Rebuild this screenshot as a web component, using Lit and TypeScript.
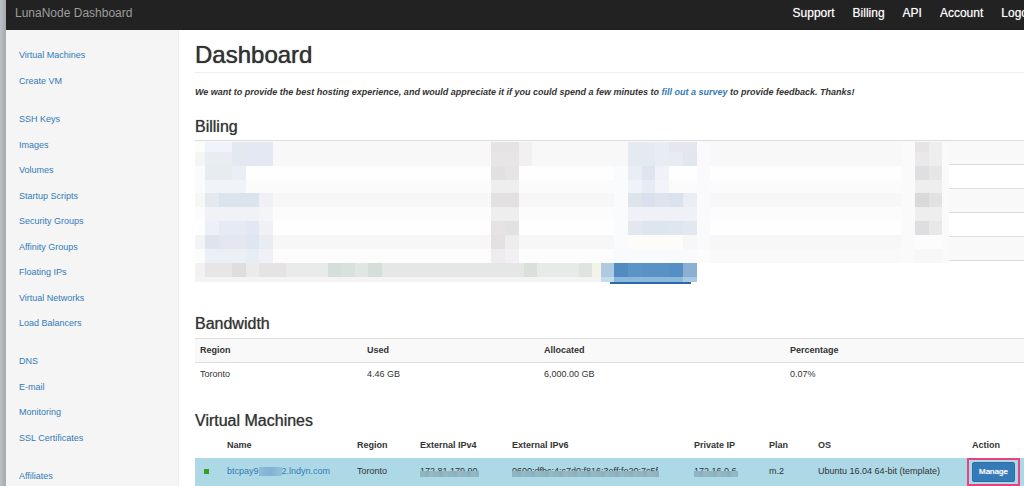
import { LitElement, html, svg, css } from "lit";
import { customElement } from "lit/decorators.js";

const NAV = ["Support", "Billing", "API", "Account", "Logout"];

const MENU = [
  ["Virtual Machines", "Create VM"],
  [
    "SSH Keys",
    "Images",
    "Volumes",
    "Startup Scripts",
    "Security Groups",
    "Affinity Groups",
    "Floating IPs",
    "Virtual Networks",
    "Load Balancers",
  ],
  ["DNS", "E-mail", "Monitoring", "SSL Certificates"],
  ["Affiliates"],
];

type Cell = [number, number, number, number, string];

// Privacy mosaic: x, y, width, height, fill.
const MOSAIC: Cell[] = [
  // bands
  [0, 1, 754, 24, "#f8f8f8"],
  [0, 25, 754, 14, "#fefefe"],
  [0, 39, 754, 13, "#fbfbfb"],
  [0, 52, 754, 14, "#f7f7f7"],
  [0, 66, 754, 14, "#fcfcfc"],
  [0, 80, 754, 14, "#fefefe"],
  [0, 94, 754, 14, "#f7f7f7"],
  [0, 108, 515, 14, "#fcfcfc"],
  [515, 108, 239, 14, "#f9f9f9"],
  [0, 122, 754, 24, "#ffffff"],
  // left labels
  [0, 1, 10, 10, "#fcfcfd"],
  [0, 11, 10, 14, "#f5f5f6"],
  [10, 1, 27, 10, "#f0f3f9"],
  [10, 11, 27, 14, "#e9edf2"],
  [37, 1, 14, 24, "#e4e8ef"],
  [51, 1, 27, 24, "#e3e8f2"],
  [10, 25, 27, 14, "#e7ecf1"],
  [37, 25, 14, 14, "#eaeff5"],
  [10, 39, 41, 13, "#f0f3f7"],
  [0, 25, 10, 27, "#fafbfd"],
  [10, 52, 14, 14, "#e4e9ef"],
  [24, 52, 40, 14, "#dbe3ed"],
  [64, 52, 14, 14, "#eff1f6"],
  [10, 66, 54, 14, "#f0f2f6"],
  [64, 66, 14, 14, "#f4f5f9"],
  [10, 80, 14, 14, "#edeff9"],
  [24, 80, 27, 14, "#e6eaf5"],
  [51, 80, 13, 14, "#e1e7f3"],
  [64, 80, 14, 14, "#eff1f7"],
  [0, 94, 10, 14, "#f3f4f5"],
  [10, 94, 14, 14, "#dfe3ed"],
  [24, 94, 27, 14, "#e4e7ef"],
  [51, 94, 13, 14, "#e0e6f1"],
  [64, 94, 14, 14, "#e9ecf3"],
  [10, 108, 41, 14, "#ebeff6"],
  [51, 108, 13, 14, "#e8ecf3"],
  [64, 108, 14, 14, "#eff1f6"],
  // left amounts
  [296, 1, 28, 10, "#e5e3e4"],
  [296, 11, 28, 14, "#e8e5e6"],
  [324, 1, 13, 24, "#f3f0f2"],
  [296, 25, 14, 14, "#e1e1e2"],
  [310, 25, 14, 14, "#e6e4e5"],
  [296, 39, 28, 13, "#eeeeee"],
  [296, 52, 28, 14, "#e2e0e1"],
  [296, 66, 28, 14, "#eeeeef"],
  [296, 80, 14, 14, "#e5e3e4"],
  [310, 80, 14, 14, "#e2e2e2"],
  [296, 94, 14, 14, "#e3e1e2"],
  [310, 94, 14, 14, "#eeedee"],
  [296, 108, 14, 14, "#eeecee"],
  [310, 108, 14, 14, "#f2f0f2"],
  // right labels
  [419, 25, 14, 97, "#fafbfd"],
  [433, 1, 27, 24, "#e5e9f0"],
  [460, 1, 14, 24, "#e8ecf3"],
  [474, 1, 28, 10, "#e4e8ee"],
  [474, 11, 14, 14, "#e7ebf2"],
  [488, 11, 14, 14, "#e2e6ed"],
  [433, 25, 14, 14, "#e9eef5"],
  [447, 25, 13, 14, "#dee5f1"],
  [460, 25, 14, 14, "#eff2f9"],
  [433, 39, 14, 13, "#eff2f7"],
  [447, 39, 13, 13, "#e7ecf4"],
  [460, 39, 14, 13, "#f2f4f9"],
  [433, 52, 14, 14, "#dee4ec"],
  [447, 52, 13, 14, "#d9e1ee"],
  [460, 52, 14, 14, "#dde4ed"],
  [474, 52, 14, 14, "#dae2ed"],
  [488, 52, 14, 14, "#e9edf4"],
  [433, 66, 69, 14, "#eff1f6"],
  [433, 80, 14, 14, "#e3e8f0"],
  [447, 80, 27, 14, "#dde5ef"],
  [474, 80, 14, 14, "#dee6f0"],
  [488, 80, 14, 14, "#e1e8f0"],
  [433, 94, 55, 14, "#fefcf8"],
  [419, 108, 83, 14, "#f8fafb"],
  [502, 1, 13, 107, "#fafafc"],
  // right amounts
  [706, 1, 14, 121, "#fafafa"],
  [720, 1, 14, 10, "#e6e4e5"],
  [720, 11, 14, 14, "#ebe8e9"],
  [734, 1, 13, 24, "#eeeeee"],
  [720, 25, 14, 14, "#dfdfe1"],
  [734, 25, 13, 14, "#e6e6e7"],
  [720, 39, 27, 13, "#eeeeef"],
  [720, 52, 14, 14, "#d9d9da"],
  [734, 52, 13, 14, "#e2e2e3"],
  [720, 66, 27, 14, "#eeeeef"],
  [720, 80, 14, 14, "#dedee0"],
  [734, 80, 13, 14, "#e8e8e9"],
  [720, 94, 27, 14, "#fcfcfc"],
  [720, 108, 27, 14, "#f7f7f7"],
  [747, 1, 7, 121, "#fafafa"],
  // bottom strip
  [0, 122, 10, 14, "#f3f1f2"],
  [10, 122, 27, 14, "#e7e5e5"],
  [37, 122, 14, 14, "#dfdedf"],
  [51, 122, 13, 14, "#ebebec"],
  [64, 122, 27, 14, "#e6e3e4"],
  [91, 122, 42, 14, "#e8ebea"],
  [133, 122, 13, 14, "#d5dfd9"],
  [146, 122, 14, 14, "#d9e1dc"],
  [160, 122, 13, 14, "#e0e6e2"],
  [173, 122, 14, 14, "#d5dfd9"],
  [187, 122, 142, 14, "#e4e7e5"],
  [329, 122, 13, 14, "#d9e0d9"],
  [342, 122, 42, 14, "#e7ebe7"],
  [384, 122, 13, 14, "#dfe4df"],
  [397, 122, 9, 14, "#f2f4ea"],
  [0, 136, 406, 5, "#f3f4f3"],
  [406, 122, 13, 14, "#aecae2"],
  [419, 122, 14, 14, "#508cc2"],
  [433, 122, 14, 14, "#5c94c7"],
  [447, 122, 27, 14, "#5b92c5"],
  [474, 122, 14, 14, "#5590c4"],
  [488, 122, 14, 14, "#8bb0d4"],
  [406, 136, 13, 5, "#c5dcef"],
  [419, 136, 69, 5, "#8db8de"],
  [488, 136, 14, 5, "#a9c8e4"],
  [415, 141, 81, 2, "#2b6aa6"],
];

const VM_HEAD = ["", "Name", "Region", "External IPv4", "External IPv6", "Private IP", "Plan", "OS", "Action"];

@customElement("app-root")
export class AppRoot extends LitElement {
  static styles = css`
    :host {
      display: block;
      font: 9px/13px "Liberation Sans", Arial, sans-serif;
      color: #333;
      background: #fff;
    }
    a {
      color: #337ab7;
      text-decoration: none;
    }
    .window {
      display: grid;
      grid-template-columns: 173px minmax(0, 1fr);
      grid-template-rows: 30px 1fr;
      min-height: 100vh;
      box-sizing: border-box;
      overflow: hidden;
      padding-left: 6px;
      background: linear-gradient(90deg, #bcc1c5, #a4a9ad) left / 6px 100% no-repeat;
    }
    .topbar {
      grid-column: 1 / -1;
      display: flex;
      align-items: center;
      justify-content: space-between;
      padding: 0 0 4px 9px;
      background: #222;
      font-size: 12px;
      line-height: 16px;
      white-space: nowrap;
      overflow: hidden;
    }
    .brand {
      color: #9d9d9d;
    }
    .nav {
      display: flex;
      gap: 18px;
      margin-right: -14px;
    }
    .nav a {
      color: #fff;
      text-shadow: 0 0 1px #999;
    }
    .sidebar {
      display: flex;
      flex-direction: column;
      gap: 13px;
      padding: 13px 0 0 13px;
      background: #f5f5f5;
      border-right: 1px solid #eee;
    }
    .group {
      display: grid;
      grid-auto-rows: 25px 26px;
      align-items: center;
      margin: 0;
      padding: 0;
      list-style: none;
    }
    .main {
      padding: 12px 0 0 16px;
    }
    h1,
    h2,
    p {
      margin: 0;
    }
    h1 {
      padding-bottom: 4px;
      border-bottom: 1px solid #eee;
      font-size: 24px;
      line-height: 26px;
      font-weight: 400;
      text-shadow: 0 0 1px #333;
    }
    h2 {
      font-size: 16px;
      line-height: 18px;
      font-weight: 400;
      text-shadow: 0 0 1px #777;
    }
    .notice {
      padding: 13px 0 19px;
      font-weight: 700;
      font-style: italic;
    }
    table {
      width: 100%;
      border-collapse: collapse;
      table-layout: fixed;
    }
    th,
    td {
      box-sizing: border-box;
      padding: 0 5px;
      text-align: left;
      white-space: nowrap;
      font-size: 9px;
    }
    .billing {
      position: relative;
      margin: 4px 0 30px;
    }
    .billing td {
      height: 24px;
      border-top: 1px solid #ddd;
    }
    .billing tr:nth-child(odd) td {
      background: #f9f9f9;
    }
    .billing table {
      border-bottom: 1px solid #ddd;
    }
    .actions {
      height: 24px;
    }
    .mosaic {
      position: absolute;
      top: 1px;
      left: 0;
    }
    .bandwidth {
      margin: 5px 0 25px;
    }
    .bandwidth th,
    .bandwidth td {
      height: 24px;
      border-top: 1px solid #ddd;
    }
    .bandwidth th {
      background: #f9f9f9;
    }
    .bw-region {
      width: 167px;
    }
    .bw-used {
      width: 177px;
    }
    .bw-alloc {
      width: 246px;
    }
    .vms {
      margin-top: 4px;
    }
    .vms th {
      height: 24px;
    }
    .vms td {
      height: 28px;
      background: #add8e6;
    }
    .c0 { width: 27px; }
    .c1 { width: 130px; }
    .c2 { width: 63px; }
    .c3 { width: 92px; }
    .c4 { width: 182px; }
    .c5 { width: 75px; }
    .c6 { width: 49px; }
    .c7 { width: 154px; }
    .vms .status {
      padding-left: 9px;
    }
    .dot {
      display: block;
      width: 5px;
      height: 5px;
      background: #3a9d23;
    }
    .veiled {
      position: relative;
      display: inline-block;
    }
    .veiled::after {
      content: "";
      position: absolute;
      inset: 6px -1px 1px 0;
      background: repeating-linear-gradient(90deg, #8fb4c2 0 5px, #8bb0be 5px 9px, #92b7c5 9px 14px);
    }
    .smudge {
      display: inline-block;
      vertical-align: middle;
      width: 23px;
      height: 9px;
      background: linear-gradient(90deg, #8fbcda, #83b1d4 50%, #94c1dc);
    }
    .vms .action {
      padding: 0;
      overflow: visible;
    }
    .marker {
      display: inline-flex;
      vertical-align: top;
      padding: 2px 3px;
      border: 2px solid #e8417f;
    }
    button {
      height: 20px;
      padding: 0 6px;
      border: 1px solid #2e6da4;
      border-radius: 2px;
      background: #337ab7;
      color: #fff;
      font: 8px/12px "Liberation Sans", Arial, sans-serif;
      text-shadow: 0 0 1px #fff;
    }
  `;

  render() {
    return html`
      <div class="window">
        <header class="topbar">
          <a class="brand" href="#">LunaNode Dashboard</a>
          <nav class="nav">${NAV.map((n) => html`<a href="#">${n}</a>`)}</nav>
        </header>
        <nav class="sidebar">
          ${MENU.map(
            (g) => html`<ul class="group">
              ${g.map((i) => html`<li><a href="#">${i}</a></li>`)}
            </ul>`
          )}
        </nav>
        <main class="main">
          <h1>Dashboard</h1>
          <p class="notice">
            We want to provide the best hosting experience, and would appreciate it if you could spend a few minutes to
            <a href="#">fill out a survey</a> to provide feedback. Thanks!
          </p>
          <h2>Billing</h2>
          <div class="billing">
            <table>
              <tbody>
                ${[0, 1, 2, 3, 4].map(() => html`<tr><td></td><td></td></tr>`)}
              </tbody>
            </table>
            <div class="actions"></div>
            <svg class="mosaic" width="754" height="146" viewBox="0 0 754 146" shape-rendering="crispEdges" aria-hidden="true">
              ${MOSAIC.map(([x, y, w, h, f]) => svg`<rect x=${x} y=${y} width=${w} height=${h} fill=${f}></rect>`)}
            </svg>
          </div>
          <h2>Bandwidth</h2>
          <table class="bandwidth">
            <thead>
              <tr>
                <th class="bw-region">Region</th>
                <th class="bw-used">Used</th>
                <th class="bw-alloc">Allocated</th>
                <th>Percentage</th>
              </tr>
            </thead>
            <tbody>
              <tr>
                <td>Toronto</td>
                <td>4.46 GB</td>
                <td>6,000.00 GB</td>
                <td>0.07%</td>
              </tr>
            </tbody>
          </table>
          <h2>Virtual Machines</h2>
          <table class="vms">
            <thead>
              <tr>${VM_HEAD.map((h, i) => html`<th class="c${i}">${h}</th>`)}</tr>
            </thead>
            <tbody>
              <tr>
                <td class="status"><span class="dot"></span></td>
                <td><a href="#">btcpay9<span class="smudge"></span>2.lndyn.com</a></td>
                <td>Toronto</td>
                <td><span class="veiled">172.81.179.90</span></td>
                <td><span class="veiled">0600:dfbc:4:c7d0:f816:3eff:fe20:7c5f</span></td>
                <td><span class="veiled">172.16.0.6</span></td>
                <td>m.2</td>
                <td>Ubuntu 16.04 64-bit (template)</td>
                <td class="action"><span class="marker"><button type="button">Manage</button></span></td>
              </tr>
            </tbody>
          </table>
        </main>
      </div>
    `;
  }
}
